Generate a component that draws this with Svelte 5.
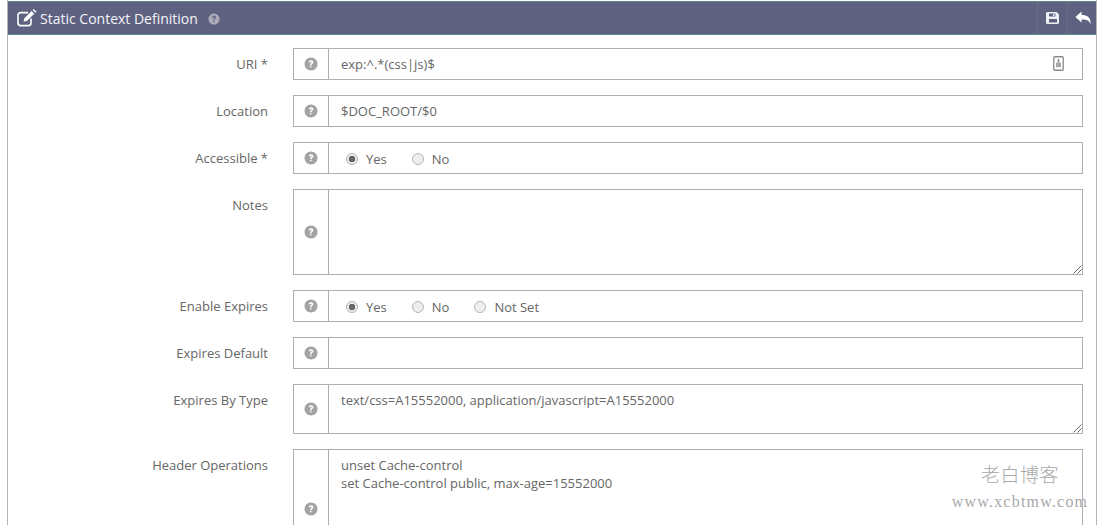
<script lang="ts">
  const help = 'M14 27C6.8 27 1 21.2 1 14S6.8 1 14 1s13 5.8 13 13-5.8 13-13 13z'
</script>

{#snippet hint()}
  <svg class="hint" viewBox="0 0 28 28" width="14" height="14" aria-hidden="true">
    <path d={help} fill="currentColor" />
    <path d="M9.6 10.6c.3-2.6 2.2-3.9 4.6-3.9 2.5 0 4.4 1.5 4.4 3.7 0 3.2-3.5 3.2-3.5 5.6h-3c0-3.6 3.3-3.7 3.3-5.4 0-.8-.6-1.3-1.3-1.3-.9 0-1.4.6-1.6 1.6z M11.9 17.6h3.1v3.1h-3.1z" fill="#fff" />
  </svg>
{/snippet}

{#snippet radio(text: string, on: boolean)}
  <span class="radio-item">
    <span class="radio {on ? 'on' : ''}"></span>
    <span>{text}</span>
  </span>
{/snippet}

{#snippet grip()}
  <svg class="grip" width="9" height="9" viewBox="0 0 9 9" aria-hidden="true">
    <path d="M8.5 0.5 0.5 8.5M8.5 4.5 4.5 8.5" stroke="#666" stroke-width="1" fill="none" />
  </svg>
{/snippet}

<div class="panel">
  <header class="panel-head">
    <div class="head-title">
      <svg width="21" height="18" viewBox="0 0 21 18" aria-hidden="true">
        <path d="M14 9.5V14a2.6 2.6 0 0 1-2.6 2.6H3.6A2.6 2.6 0 0 1 1 14V6.2a2.6 2.6 0 0 1 2.6-2.6H11" fill="none" stroke="#fff" stroke-width="1.6" />
        <path d="M6.6 12.6l.6-3.2L14.6 2l2.7 2.7-7.4 7.3z M15.6 1l1-1 3 2.7-1.1 1.1z" fill="#fff" />
      </svg>
      <span>Static Context Definition</span>
      <svg class="head-hint" viewBox="0 0 28 28" width="12" height="12" aria-hidden="true">
        <path d={help} fill="#a9a9b8" />
        <path d="M9.6 10.6c.3-2.6 2.2-3.9 4.6-3.9 2.5 0 4.4 1.5 4.4 3.7 0 3.2-3.5 3.2-3.5 5.6h-3c0-3.6 3.3-3.7 3.3-5.4 0-.8-.6-1.3-1.3-1.3-.9 0-1.4.6-1.6 1.6z M11.9 17.6h3.1v3.1h-3.1z" fill="#5e6180" />
      </svg>
    </div>
    <div class="head-actions">
      <span class="action">
        <svg width="14" height="14" viewBox="0 0 14 14" aria-hidden="true">
          <path fill-rule="evenodd" d="M1.5 1H10.5L13 3.5V11.5a1.5 1.5 0 0 1-1.5 1.5h-10A1.5 1.5 0 0 1 0 11.5v-9A1.5 1.5 0 0 1 1.5 1zM3 2.4V5.6H9.4V2.4zM7 3h1.4v2H7zM3 8v3.6h8V8z" fill="#eef0f5" />
        </svg>
      </span>
      <span class="action">
        <svg width="16" height="14" viewBox="0 0 16 14" aria-hidden="true">
          <path d="M6.6 0.6V4C12 4 16 6 15.6 13.4 14.4 9.6 12 8.4 6.6 8.4V11.6L0.4 6.1z" fill="#fff" />
        </svg>
      </span>
    </div>
  </header>

  <div class="panel-body">
    <div class="row">
      <div class="label">URI *</div>
      <div class="group">
        <div class="addon">{@render hint()}</div>
        <div class="field single">
          <span>exp:^.*(css|js)$</span>
          <svg class="doc" width="11" height="15" viewBox="0 0 11 15" aria-hidden="true">
            <rect x="0.75" y="0.75" width="9.5" height="13.5" rx="1" fill="none" stroke="#8a8a8a" stroke-width="1.3" />
            <path d="M5.5 3v3.4" stroke="#8a8a8a" stroke-width="1.6" fill="none" />
            <rect x="3" y="6.6" width="5" height="4.6" fill="#a8a8a8" />
          </svg>
        </div>
      </div>
    </div>

    <div class="row">
      <div class="label">Location</div>
      <div class="group">
        <div class="addon">{@render hint()}</div>
        <div class="field single">$DOC_ROOT/$0</div>
      </div>
    </div>

    <div class="row">
      <div class="label">Accessible *</div>
      <div class="group">
        <div class="addon">{@render hint()}</div>
        <div class="field radios">
          {@render radio('Yes', true)}
          {@render radio('No', false)}
        </div>
      </div>
    </div>

    <div class="row">
      <div class="label">Notes</div>
      <div class="group notes">
        <div class="addon">{@render hint()}</div>
        <div class="field area">{@render grip()}</div>
      </div>
    </div>

    <div class="row">
      <div class="label">Enable Expires</div>
      <div class="group">
        <div class="addon">{@render hint()}</div>
        <div class="field radios">
          {@render radio('Yes', true)}
          {@render radio('No', false)}
          {@render radio('Not Set', false)}
        </div>
      </div>
    </div>

    <div class="row">
      <div class="label">Expires Default</div>
      <div class="group">
        <div class="addon">{@render hint()}</div>
        <div class="field single"></div>
      </div>
    </div>

    <div class="row">
      <div class="label">Expires By Type</div>
      <div class="group bytype">
        <div class="addon">{@render hint()}</div>
        <div class="field area">
          <div>text/css=A15552000, application/javascript=A15552000</div>
          {@render grip()}
        </div>
      </div>
    </div>

    <div class="row">
      <div class="label">Header Operations</div>
      <div class="group headers">
        <div class="addon">{@render hint()}</div>
        <div class="field area">
          <div>unset Cache-control</div>
          <div>set Cache-control public, max-age=15552000</div>
        </div>
      </div>
    </div>
  </div>
</div>

<div class="watermark">
  <div class="wm-cn">老白博客</div>
  <div class="wm-url">www.xcbtmw.com</div>
</div>

<style>
  :global(body) {
    background: #fff;
    overflow: hidden;
  }

  .panel {
    height: 525px;
    box-sizing: border-box;
    margin: 0 3px 0 7px;
    border-left: 1px solid #b4b4b4;
    border-right: 1px solid #b4b4b4;
    overflow: hidden;
    font-family: "Open Sans", sans-serif;
    font-size: 13px;
    color: #666;
  }

  .panel-head {
    display: flex;
    align-items: center;
    justify-content: space-between;
    height: 34px;
    box-sizing: border-box;
    margin: 1px -1px 0;
    border-top: 1px solid #5f8a8b;
    border-bottom: 1px solid #5f8a8b;
    background: #5e6180;
    color: #fff;
  }
  .head-title {
    display: flex;
    align-items: center;
    padding-left: 10px;
    font-size: 14px;
    color: #f4f4f8;
  }
  .head-title svg:first-child { margin-right: 2px; }
  .head-hint { margin-left: 10px; margin-top: 1px; }

  .head-actions {
    display: flex;
    align-items: stretch;
    height: 100%;
  }
  .action {
    display: flex;
    align-items: center;
    justify-content: center;
    width: 29px;
    border-left: 1px solid #6a6d8a;
  }

  .panel-body {
    display: flex;
    flex-direction: column;
    gap: 15px;
    padding: 13px 13px 0 0;
  }

  .row {
    display: flex;
    align-items: flex-start;
  }
  .label {
    flex: 0 0 260px;
    text-align: right;
    line-height: 16px;
    padding-top: 8px;
  }

  .group {
    flex: 1;
    display: flex;
    height: 32px;
    margin-left: 25px;
    box-sizing: border-box;
    border: 1px solid #aeaeae;
  }
  .notes { height: 86px; }
  .bytype { height: 50px; }
  .headers { height: 120px; }

  .addon {
    flex: 0 0 35px;
    display: flex;
    align-items: center;
    justify-content: center;
    border-right: 1px solid #aeaeae;
    padding-right: 1px;
    box-sizing: border-box;
    color: #a3a3a3;
  }

  .field {
    flex: 1;
    position: relative;
    padding: 0 12px;
    min-width: 0;
  }
  .single {
    display: flex;
    align-items: center;
    justify-content: space-between;
    line-height: 30px;
  }
  .doc { margin: 0 6px 2px 0; }
  .area {
    padding-top: 6px;
    line-height: 18px;
  }
  .grip {
    position: absolute;
    right: 0;
    bottom: 0;
  }

  .radios {
    display: flex;
    align-items: center;
    gap: 25px;
    padding: 1px 0 0 17px;
  }
  .radio-item {
    display: flex;
    align-items: center;
    gap: 8px;
  }
  .radio {
    display: block;
    width: 12px;
    height: 12px;
    box-sizing: border-box;
    border: 1px solid #b5b5b5;
    border-radius: 50%;
    background: #eee;
  }
  .radio.on {
    background: radial-gradient(circle, #666 0 3px, #e9e9e9 3.5px);
  }

  .watermark {
    position: absolute;
    top: 461px;
    left: 950px;
    width: 140px;
    text-align: center;
    color: #a9a9a9;
    pointer-events: none;
  }
  .wm-cn {
    font-family: "Noto Sans CJK SC", serif;
    font-size: 19px;
    line-height: 26px;
    letter-spacing: 0.5px;
    font-weight: 300;
  }
  .wm-url {
    font-family: "Liberation Serif", serif;
    font-size: 16px;
    line-height: 30px;
    letter-spacing: 1.2px;
    white-space: nowrap;
  }
</style>
